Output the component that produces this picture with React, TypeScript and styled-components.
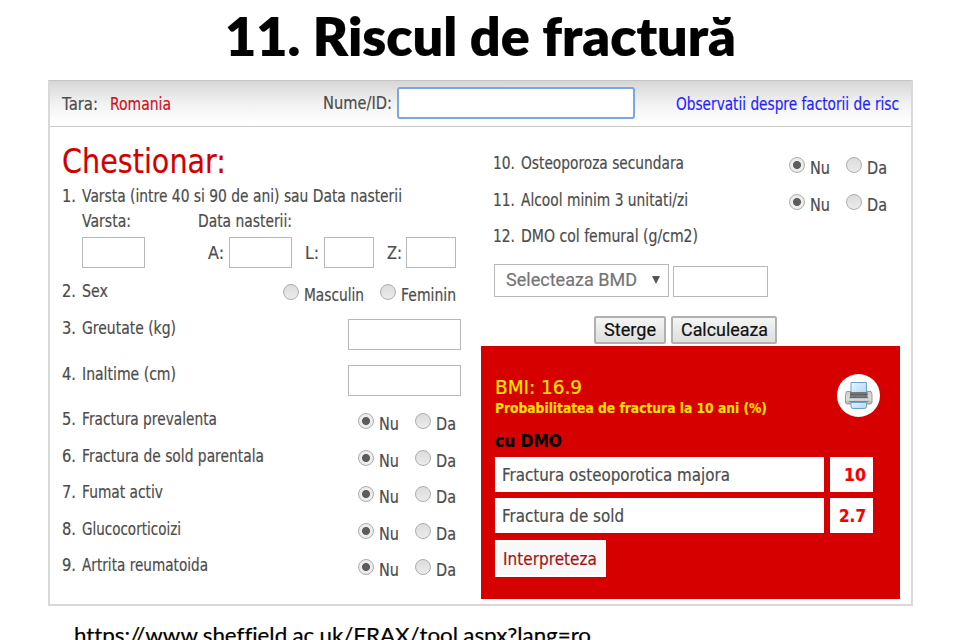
import React, { useLayoutEffect, useRef, useState } from 'react';
import styled, { createGlobalStyle } from 'styled-components';

const GlobalStyle = createGlobalStyle`
  *, *::before, *::after { box-sizing: border-box; }
  html, body { margin: 0; padding: 0; background: #fff; overflow: hidden; }
`;

const Page = styled.main`
  width: 960px;
  height: 640px;
  overflow: hidden;
  display: flex;
  flex-direction: column;
  color: #4c4c4c;
  font: 17px/24px 'DejaVu Sans', sans-serif;
  font-variant-ligatures: none;
  -webkit-text-stroke: 0.2px currentColor;
`;

const FitOuter = styled.span<{ $w: number }>`
  display: inline-block;
  flex: none;
  width: ${(p) => p.$w}px;
  white-space: nowrap;
`;

const FitInner = styled.span`
  display: inline-block;
  transform-origin: 0 50%;
`;

/* Condenses a run of text horizontally so it fills exactly `w` pixels. */
function Fit({ w, children }: { w: number; children: string }) {
  const ref = useRef<HTMLSpanElement>(null);
  const [scale, setScale] = useState(1);
  useLayoutEffect(() => {
    if (ref.current) {
      const range = document.createRange();
      range.selectNodeContents(ref.current);
      const natural = range.getBoundingClientRect().width;
      if (natural > 0) setScale(w / natural);
    }
  }, []);
  return (
    <FitOuter $w={w}>
      <FitInner ref={ref} style={{ transform: `scaleX(${scale})` }}>{children}</FitInner>
    </FitOuter>
  );
}

const Title = styled.h1`
  flex: none;
  margin: 0;
  height: 80px;
  padding: 0 0 0 225px;
  color: #000;
  font: 800 53px/72px Lato, sans-serif;
  font-variant-ligatures: none;
`;

const Panel = styled.section`
  flex: none;
  width: 865px;
  height: 526px;
  margin-left: 48px;
  border: 2px solid #d9d9d9;
  border-top: 1px solid #c4c4c4;
  display: flex;
  flex-direction: column;
`;

const Header = styled.header`
  flex: none;
  height: 46px;
  display: flex;
  align-items: center;
  padding-left: 12px;
  border-bottom: 1px solid #c8c8c8;
  background: linear-gradient(#d6d6d6, #f2f2f2 50%, #fff 95%);
`;

const Country = styled.span`
  margin: 0 152px 0 12px;
  color: #cf1020;
`;

const NameInput = styled.input`
  width: 238px;
  height: 32px;
  margin: -1px 41px 0 5px;
  border: 2px solid #7aa5e6;
  border-radius: 3px;
  background: #fff;
  outline: none;
`;

const NameLabel = styled.label`
  margin-top: -2px;
`;

const RiskLink = styled.a`
  color: #1f1fff;
`;

const Columns = styled.div`
  flex: 1;
  display: grid;
  grid-template-columns: 431px 420px;
`;

const Left = styled.div`
  padding: 15px 0 0 12px;
`;

const Right = styled.div`
  padding-top: 20px;
`;

const Heading = styled.h2`
  margin: 0;
  height: 42px;
  color: #d00000;
  font: 400 33.5px/40px 'DejaVu Sans', sans-serif;
`;

const Row = styled.div<{ $h: number; $indent?: number }>`
  display: flex;
  align-items: center;
  height: ${(p) => p.$h}px;
  padding-left: ${(p) => p.$indent ?? 0}px;
`;

const Num = styled.span<{ $w: number }>`
  flex: none;
  width: ${(p) => p.$w}px;
`;

const Question = styled.div<{ $lift?: number }>`
  display: flex;
  flex: 1;
  padding-bottom: ${(p) => p.$lift ?? 4}px;
`;

const Box = styled.input<{ $w: number; $gap?: number }>`
  flex: none;
  width: ${(p) => p.$w}px;
  height: 31px;
  margin: 0 ${(p) => p.$gap ?? 0}px 0 0;
  border: 1.5px solid #b8b8b8;
  background: #fff;
`;

const FieldLabel = styled.label<{ $gap: number }>`
  display: flex;
  margin-right: ${(p) => p.$gap}px;
`;

const Choices = styled.div<{ $edge: number }>`
  display: flex;
  gap: 16px;
  margin-right: ${(p) => p.$edge}px;
`;

const Choice = styled.label`
  display: flex;
  align-items: center;
  gap: 5px;
`;

const ChoiceText = styled.span`
  padding-top: 6px;
`;

const Dot = styled.i<{ $on?: boolean }>`
  width: 16px;
  height: 16px;
  border: 1.5px solid #adadad;
  border-radius: 50%;
  background: ${(p) =>
    p.$on
      ? 'radial-gradient(circle, #5c5c5c 0 3.6px, #ececec 4.4px)'
      : 'linear-gradient(#dcdcdc, #ebebeb)'};
`;

const BmdSelect = styled.div`
  width: 175px;
  height: 33px;
  margin: -2px 4px 0 1px;
  padding: 0 8px 0 11px;
  display: flex;
  align-items: center;
  justify-content: space-between;
  border: 1.5px solid #b8b8b8;
  color: #757575;
  font: 18px/24px Roboto, sans-serif;
`;

const Arrow = styled.i`
  border: 4px solid transparent;
  border-top: 8px solid #555;
  border-bottom: 0;
`;

const Actions = styled.div`
  display: flex;
  gap: 5px;
  margin: 10px 0 2px 113px;
`;

const Action = styled.button<{ $w: number }>`
  width: ${(p) => p.$w}px;
  height: 28px;
  padding: 0;
  border: 2px solid #b0b0b0;
  border-radius: 2px;
  background: linear-gradient(#f5f5f5, #dedede);
  color: #111;
  font: 18px/24px Roboto, sans-serif;
`;

const Result = styled.section`
  width: 419px;
  height: 253px;
  padding: 28px 20px 0 14px;
  background: #d60000;
`;

const ResultTop = styled.div`
  display: flex;
  justify-content: space-between;
  height: 55px;
`;

const Bmi = styled.div`
  height: 24px;
  color: #ffe600;
  font-size: 20px;
  line-height: 26px;
`;

const Probability = styled.div`
  color: #ffdf00;
  font-size: 14.5px;
  font-weight: 700;
  line-height: 20px;
`;

const WithBmd = styled.div`
  height: 28px;
  color: #000;
  font-weight: 700;
`;

const ResultRow = styled.div`
  display: flex;
  gap: 6px;
  height: 35px;
  margin-bottom: 6.5px;
`;

const Outcome = styled.div`
  width: 329px;
  padding-left: 7px;
  background: #fff;
  line-height: 36px;
`;

const Score = styled.div`
  width: 43px;
  padding-right: 7px;
  background: #fff;
  color: #f40000;
  font-weight: 700;
  line-height: 36px;
  text-align: right;
`;

const Interpret = styled.div`
  width: 111px;
  height: 37px;
  padding-left: 6px;
  border: 2px solid #fff;
  background: #f8f8f8;
  color: #a31515;
  line-height: 35px;
`;

const PrintButton = styled.div`
  width: 43px;
  height: 43px;
  border-radius: 50%;
  background: #fff;
`;

const Source = styled.footer`
  flex: none;
  padding: 15px 0 0 74px;
  color: #000;
  font: 21.5px/28px Lato, sans-serif;
  font-variant-ligatures: none;
`;

function Printer() {
  return (
    <svg width="43" height="43" viewBox="0 0 43 43">
      <defs>
        <linearGradient id="paper" x1="0" y1="0" x2="1" y2="1">
          <stop offset="0" stopColor="#e8f5ff" />
          <stop offset="1" stopColor="#acd6f4" />
        </linearGradient>
        <linearGradient id="body" x1="0" y1="0" x2="0" y2="1">
          <stop offset="0" stopColor="#cecece" />
          <stop offset=".6" stopColor="#e0e0e0" />
          <stop offset="1" stopColor="#aaa" />
        </linearGradient>
      </defs>
      <path d="M11 17.5h-1.5l-1 3v7.5q0 2 2 2h22.5q2 0 2-2v-7.500l-1-3H32z" fill="url(#body)" stroke="#999" />
      <path d="M14 8.5h15.5v12H14z" fill="url(#paper)" stroke="#6f9fc5" />
      <path d="M13 18h17.5v6.5H13z" fill="#777" />
      <path d="M13 20.5h17.5M12 24h19.5" stroke="#606060" />
      <path d="M10 25h23.5" stroke="#d8d8d8" strokeWidth="1.5" />
      <path d="M12 27.5h19.5" stroke="#858585" />
      <path d="M14 28.5h15.5v4q0 2-2 2H16q-2 0-2-2z" fill="url(#paper)" stroke="#6f9fc5" />
    </svg>
  );
}

function NoYes({ edge }: { edge: number }) {
  return (
    <Choices $edge={edge}>
      <Choice><Dot $on /><ChoiceText><Fit w={20}>Nu</Fit></ChoiceText></Choice>
      <Choice><Dot /><ChoiceText><Fit w={20}>Da</Fit></ChoiceText></Choice>
    </Choices>
  );
}

const riskFactors = [
  { n: '5.', text: 'Fractura prevalenta', w: 135 },
  { n: '6.', text: 'Fractura de sold parentala', w: 182 },
  { n: '7.', text: 'Fumat activ', w: 81 },
  { n: '8.', text: 'Glucocorticoizi', w: 99 },
  { n: '9.', text: 'Artrita reumatoida', w: 126 },
];

export default function App() {
  return (
    <Page>
      <GlobalStyle />
      <Title><Fit w={511}>11. Riscul de fractură</Fit></Title>
      <Panel>
        <Header>
          <Fit w={36}>Tara:</Fit>
          <Country><Fit w={61}>Romania</Fit></Country>
          <NameLabel><Fit w={69}>Nume/ID:</Fit></NameLabel>
          <NameInput />
          <RiskLink><Fit w={223}>Observatii despre factorii de risc</Fit></RiskLink>
        </Header>
        <Columns>
          <Left>
            <Heading><Fit w={164}>Chestionar:</Fit></Heading>
            <Row $h={24}>
              <Num $w={20}><Fit w={14}>1.</Fit></Num>
              <Fit w={320}>Varsta (intre 40 si 90 de ani) sau Data nasterii</Fit>
            </Row>
            <Row $h={25} $indent={20}>
              <FieldLabel $gap={67}><Fit w={49}>Varsta:</Fit></FieldLabel>
              <Fit w={94}>Data nasterii:</Fit>
            </Row>
            <Row $h={39} $indent={20}>
              <Box $w={63} $gap={63} />
              <FieldLabel $gap={5}><Fit w={16}>A:</Fit></FieldLabel>
              <Box $w={63} $gap={13} />
              <FieldLabel $gap={5}><Fit w={14}>L:</Fit></FieldLabel>
              <Box $w={50} $gap={13} />
              <FieldLabel $gap={4}><Fit w={15}>Z:</Fit></FieldLabel>
              <Box $w={50} />
            </Row>
            <Row $h={40}>
              <Question $lift={2}><Num $w={20}><Fit w={14}>2.</Fit></Num><Fit w={26}>Sex</Fit></Question>
              <Choices $edge={25}>
                <Choice><Dot /><ChoiceText><Fit w={60}>Masculin</Fit></ChoiceText></Choice>
                <Choice><Dot /><ChoiceText><Fit w={55}>Feminin</Fit></ChoiceText></Choice>
              </Choices>
            </Row>
            <Row $h={45.5}>
              <Question $lift={13}><Num $w={20}><Fit w={14}>3.</Fit></Num><Fit w={94}>Greutate (kg)</Fit></Question>
              <Box $w={113} $gap={20} />
            </Row>
            <Row $h={45.5}>
              <Question $lift={13}><Num $w={20}><Fit w={14}>4.</Fit></Num><Fit w={94}>Inaltime (cm)</Fit></Question>
              <Box $w={113} $gap={20} />
            </Row>
            {riskFactors.map((f) => (
              <Row key={f.n} $h={36.5}>
                <Question><Num $w={20}><Fit w={14}>{f.n}</Fit></Num><Fit w={f.w}>{f.text}</Fit></Question>
                <NoYes edge={25} />
              </Row>
            ))}
          </Left>
          <Right>
            <Row $h={36.5} $indent={12}>
              <Question><Num $w={28}><Fit w={22}>10.</Fit></Num><Fit w={163}>Osteoporoza secundara</Fit></Question>
              <NoYes edge={14} />
            </Row>
            <Row $h={36.5} $indent={12}>
              <Question><Num $w={28}><Fit w={22}>11.</Fit></Num><Fit w={167}>Alcool minim 3 unitati/zi</Fit></Question>
              <NoYes edge={14} />
            </Row>
            <Row $h={36.5} $indent={12}>
              <Question><Num $w={28}><Fit w={22}>12.</Fit></Num><Fit w={177}>DMO col femural (g/cm2)</Fit></Question>
            </Row>
            <Row $h={49} $indent={12}>
              <BmdSelect><Fit w={131}>Selecteaza BMD</Fit><Arrow /></BmdSelect>
              <Box $w={95} />
            </Row>
            <Actions>
              <Action $w={72}><Fit w={52}>Sterge</Fit></Action>
              <Action $w={106}><Fit w={87}>Calculeaza</Fit></Action>
            </Actions>
            <Result>
              <ResultTop>
                <div>
                  <Bmi><Fit w={87}>BMI: 16.9</Fit></Bmi>
                  <Probability><Fit w={272}>Probabilitatea de fractura la 10 ani (%)</Fit></Probability>
                </div>
                <PrintButton><Printer /></PrintButton>
              </ResultTop>
              <WithBmd><Fit w={67}>cu DMO</Fit></WithBmd>
              <ResultRow>
                <Outcome><Fit w={228}>Fractura osteoporotica majora</Fit></Outcome>
                <Score><Fit w={22}>10</Fit></Score>
              </ResultRow>
              <ResultRow>
                <Outcome><Fit w={122}>Fractura de sold</Fit></Outcome>
                <Score><Fit w={27}>2.7</Fit></Score>
              </ResultRow>
              <Interpret><Fit w={94}>Interpreteza</Fit></Interpret>
            </Result>
          </Right>
        </Columns>
      </Panel>
      <Source><Fit w={517}>https://www.sheffield.ac.uk/FRAX/tool.aspx?lang=ro</Fit></Source>
    </Page>
  );
}
